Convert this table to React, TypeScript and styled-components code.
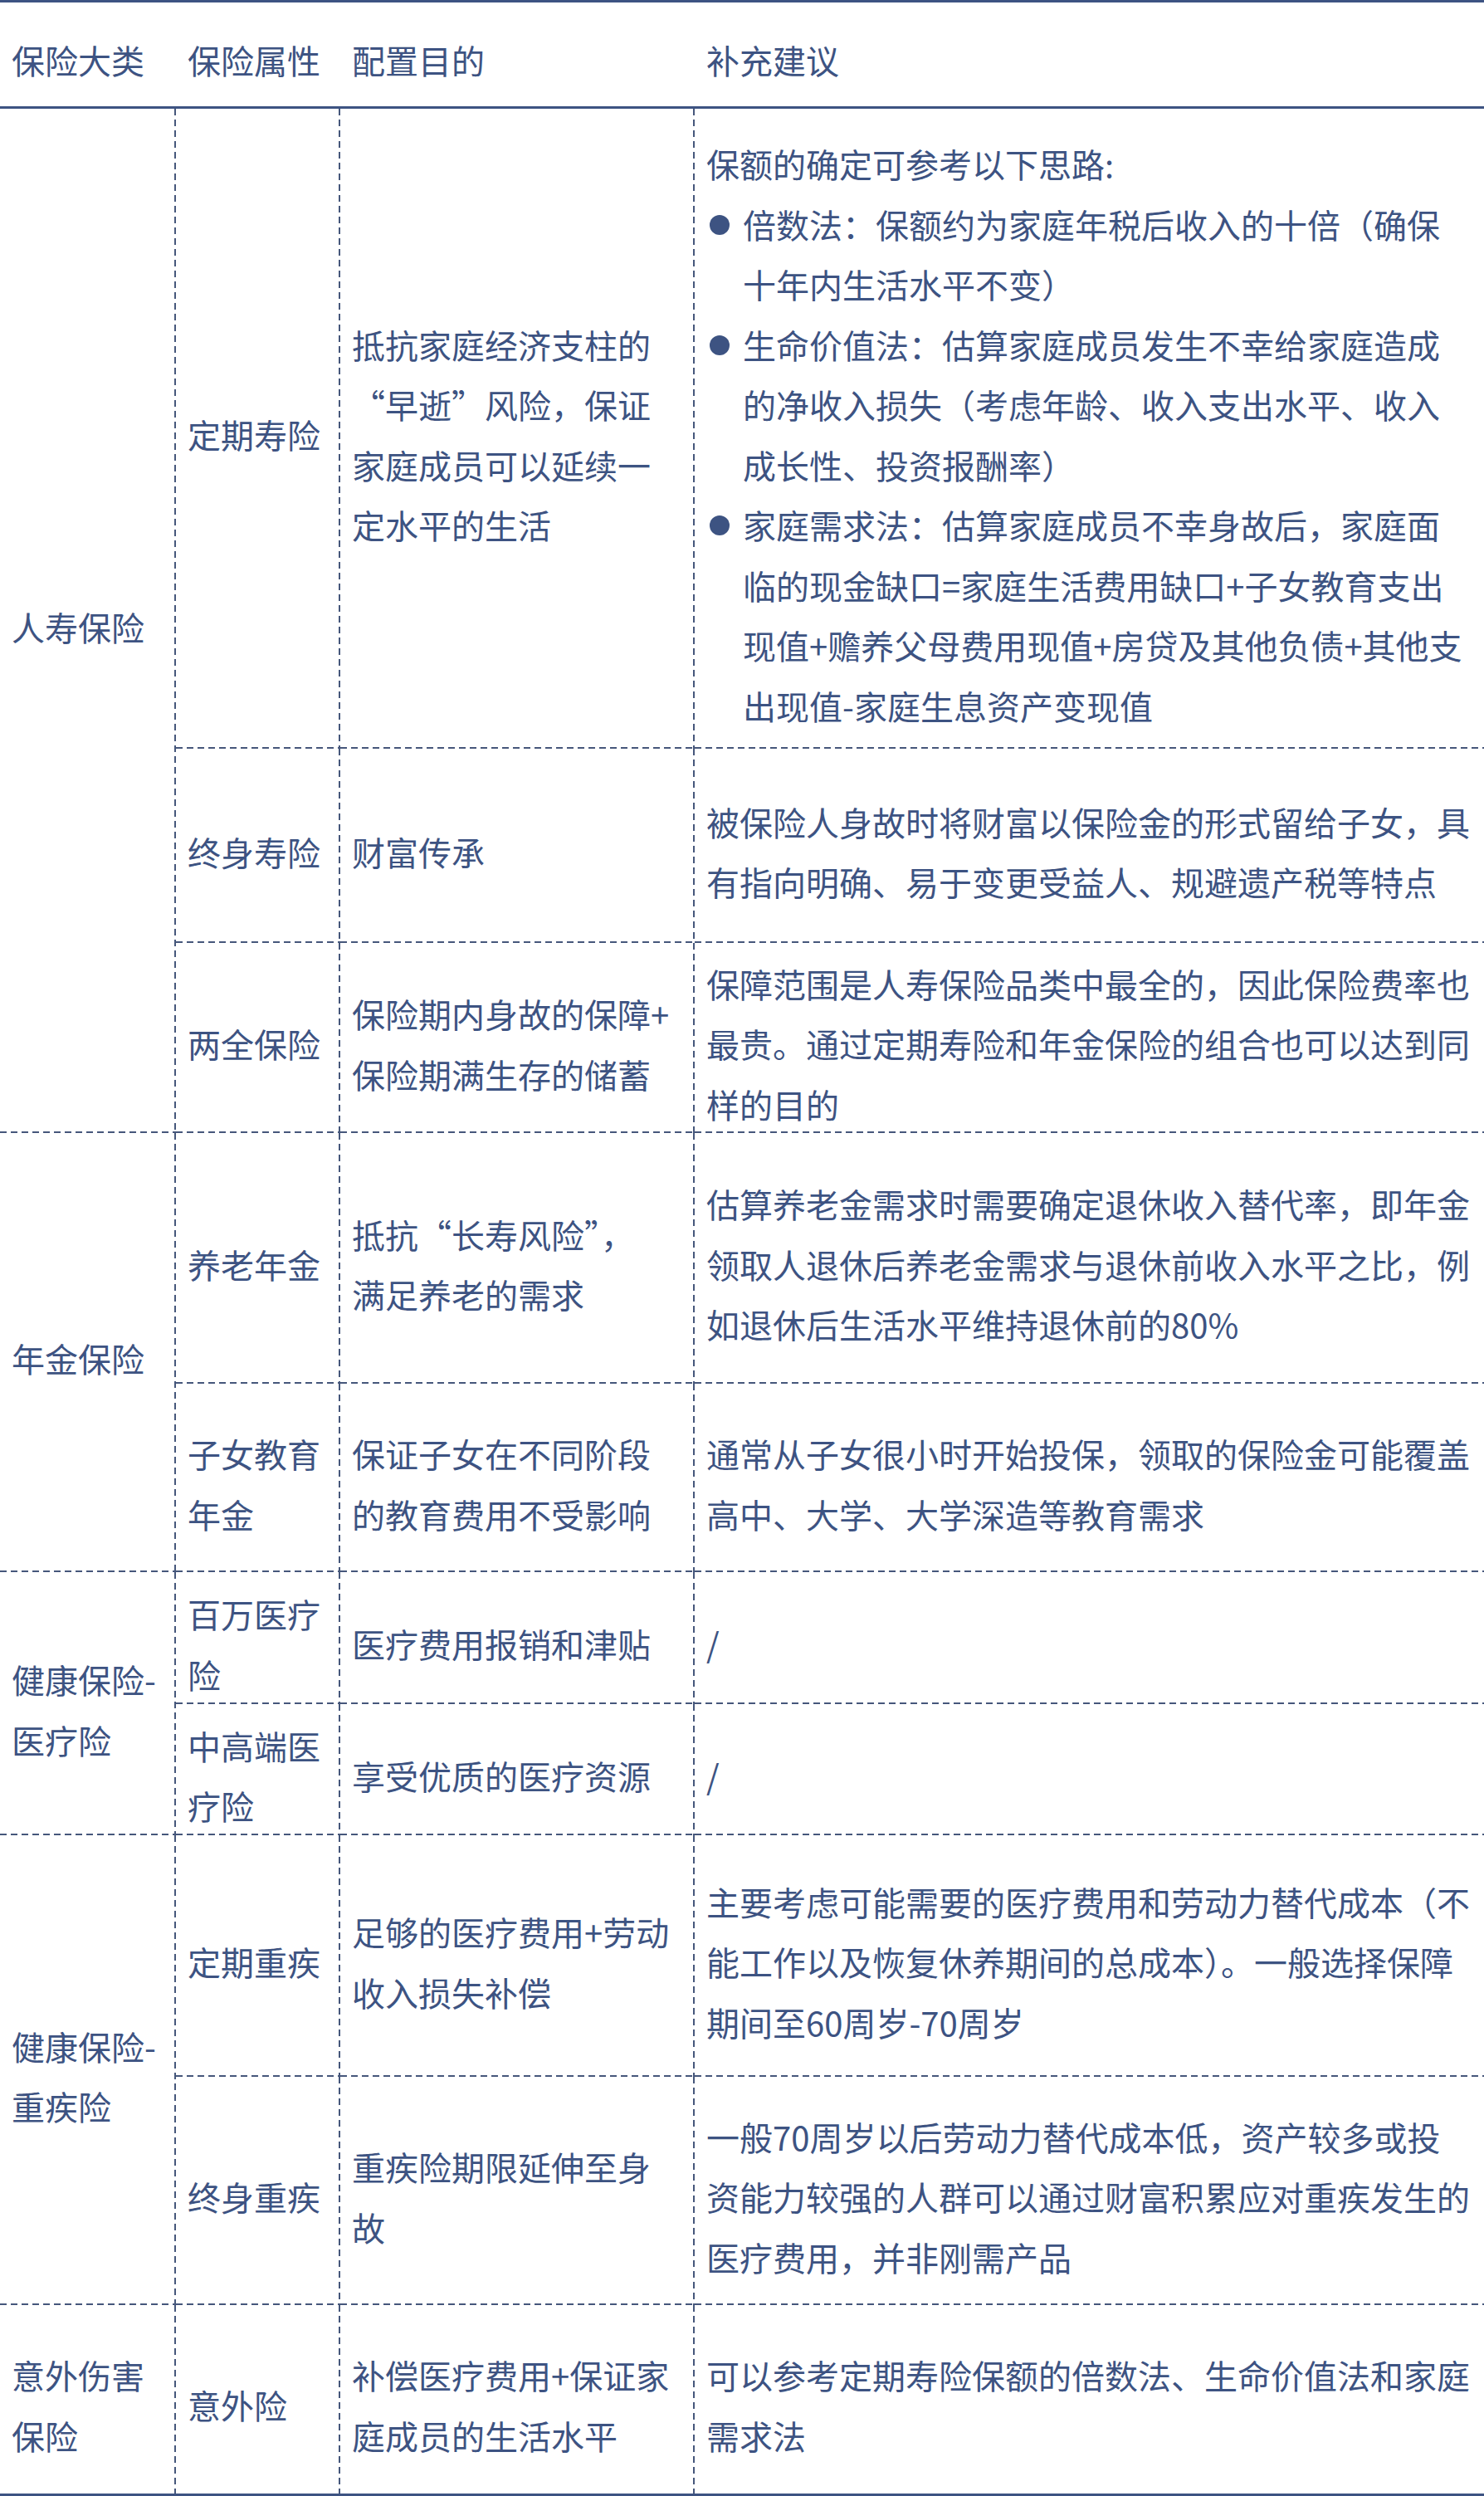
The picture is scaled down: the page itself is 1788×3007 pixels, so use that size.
import React from "react";
import styled, { createGlobalStyle } from "styled-components";

const INK = "#3d5382";
const LINE = "#46577b";

const GlobalStyle = createGlobalStyle`
  html, body {
    margin: 0;
    padding: 0;
    background: #ffffff;
  }
  body {
    font-family: "Noto Sans CJK SC", "Noto Sans", sans-serif;
    color: ${INK};
  }
`;

const COLS = "212px 198px 427px 951px";
const ROW_HEIGHTS = [771, 234, 229, 302, 227, 159, 158, 291, 275, 227];
const PAD_RIGHT = [7, 7, 15, 16];

type Advice = string | { intro: string; bullets: string[] };

type Item = {
  name: string;
  purpose: string;
  advice: Advice;
};

type Group = {
  title: string;
  items: Item[];
};

// "\n" marks the places where the original slide breaks a line differently
// from the browser's own CJK line breaking (quotes and "+" stick to neighbours)
const groups: Group[] = [
  {
    title: "人寿保险",
    items: [
      {
        name: "定期寿险",
        purpose: "抵抗家庭经济支柱的\n“早逝”风险，保证家庭成员可以延续一定水平的生活",
        advice: {
          intro: "保额的确定可参考以下思路:",
          bullets: [
            "倍数法：保额约为家庭年税后收入的十倍（确保十年内生活水平不变）",
            "生命价值法：估算家庭成员发生不幸给家庭造成的净收入损失（考虑年龄、收入支出水平、收入成长性、投资报酬率）",
            "家庭需求法：估算家庭成员不幸身故后，家庭面临的现金缺口=家庭生活费用缺口+子女教育支出现值+赡养父母费用现值+房贷及其他负债+其他支出现值-家庭生息资产变现值",
          ],
        },
      },
      {
        name: "终身寿险",
        purpose: "财富传承",
        advice: "被保险人身故时将财富以保险金的形式留给子女，具有指向明确、易于变更受益人、规避遗产税等特点",
      },
      {
        name: "两全保险",
        purpose: "保险期内身故的保障+\n保险期满生存的储蓄",
        advice: "保障范围是人寿保险品类中最全的，因此保险费率也最贵。通过定期寿险和年金保险的组合也可以达到同样的目的",
      },
    ],
  },
  {
    title: "年金保险",
    items: [
      {
        name: "养老年金",
        purpose: "抵抗“长寿风险”，\n满足养老的需求",
        advice: "估算养老金需求时需要确定退休收入替代率，即年金领取人退休后养老金需求与退休前收入水平之比，例如退休后生活水平维持退休前的80%",
      },
      {
        name: "子女教育年金",
        purpose: "保证子女在不同阶段的教育费用不受影响",
        advice: "通常从子女很小时开始投保，领取的保险金可能覆盖高中、大学、大学深造等教育需求",
      },
    ],
  },
  {
    title: "健康保险-医疗险",
    items: [
      { name: "百万医疗险", purpose: "医疗费用报销和津贴", advice: "/" },
      { name: "中高端医疗险", purpose: "享受优质的医疗资源", advice: "/" },
    ],
  },
  {
    title: "健康保险-重疾险",
    items: [
      {
        name: "定期重疾",
        purpose: "足够的医疗费用+劳动收入损失补偿",
        advice: "主要考虑可能需要的医疗费用和劳动力替代成本（不能工作以及恢复休养期间的总成本）。一般选择保障期间至60周岁-70周岁",
      },
      {
        name: "终身重疾",
        purpose: "重疾险期限延伸至身故",
        advice: "一般70周岁以后劳动力替代成本低，资产较多或投资能力较强的人群可以通过财富积累应对重疾发生的医疗费用，并非刚需产品",
      },
    ],
  },
  {
    title: "意外伤害保险",
    items: [
      {
        name: "意外险",
        purpose: "补偿医疗费用+保证家庭成员的生活水平",
        advice: "可以参考定期寿险保额的倍数法、生命价值法和家庭需求法",
      },
    ],
  },
];

const dashV = `repeating-linear-gradient(to bottom, ${LINE} 0 8px, transparent 8px 13px)`;
const dashH = `repeating-linear-gradient(to right, ${LINE} 0 8px, transparent 8px 13px)`;

const Sheet = styled.div`
  width: 1788px;
  border-top: 3px solid ${INK};
  border-bottom: 3px solid ${INK};
  font-size: 40px;
  line-height: 72.5px;
`;

const HeadRow = styled.div`
  display: grid;
  grid-template-columns: ${COLS};
  height: 125px;
  border-bottom: 3px solid ${INK};
`;

const HeadCell = styled.div<{ $col: number }>`
  display: flex;
  align-items: center;
  padding: 14px ${(p) => PAD_RIGHT[p.$col]}px 0 14px;
  white-space: nowrap;
`;

const Body = styled.div<{ $rows: string }>`
  display: grid;
  grid-template-columns: ${COLS};
  grid-template-rows: ${(p) => p.$rows};
`;

const Cell = styled.div<{ $col: number; $span?: number; $bottom: boolean }>`
  grid-column: ${(p) => p.$col + 1};
  grid-row: span ${(p) => p.$span ?? 1};
  min-width: 0;
  display: flex;
  flex-direction: column;
  justify-content: center;
  padding: 14px ${(p) => PAD_RIGHT[p.$col]}px 0 14px;
  white-space: pre-line;
  background-repeat: no-repeat;
  background-image: ${(p) =>
    [p.$col < 3 ? dashV : "", p.$bottom ? dashH : ""].filter(Boolean).join(", ") || "none"};
  background-size: ${(p) =>
    [p.$col < 3 ? "2px 100%" : "", p.$bottom ? "100% 2px" : ""].filter(Boolean).join(", ") || "auto"};
  background-position: ${(p) =>
    [p.$col < 3 ? "right top" : "", p.$bottom ? "left bottom" : ""].filter(Boolean).join(", ") ||
    "0 0"};
`;

const BulletList = styled.ul`
  list-style: none;
  margin: 0;
  padding: 0;
`;

const BulletItem = styled.li`
  display: flex;
  align-items: flex-start;
  padding-right: 1px;
`;

const Dot = styled.span`
  flex: none;
  width: 24px;
  height: 24px;
  margin: 25px 16px 0 4px;
  border-radius: 50%;
  background: ${INK};
`;

const BulletText = styled.span`
  flex: 1;
  min-width: 0;
`;

const AdviceBlock = ({ advice }: { advice: Advice }) => {
  if (typeof advice === "string") return <div>{advice}</div>;
  return (
    <>
      <div>{advice.intro}</div>
      <BulletList>
        {advice.bullets.map((b) => (
          <BulletItem key={b}>
            <Dot />
            <BulletText>{b}</BulletText>
          </BulletItem>
        ))}
      </BulletList>
    </>
  );
};

const App = () => {
  const total = groups.reduce((n, g) => n + g.items.length, 0);
  let rowIndex = 0;

  return (
    <>
      <GlobalStyle />
      <Sheet>
        <HeadRow>
          {["保险大类", "保险属性", "配置目的", "补充建议"].map((h, i) => (
            <HeadCell key={h} $col={i}>
              {h}
            </HeadCell>
          ))}
        </HeadRow>
        <Body $rows={ROW_HEIGHTS.map((h) => `${h}px`).join(" ")}>
          {groups.map((g) => {
            const start = rowIndex;
            rowIndex += g.items.length;
            const groupLast = rowIndex === total;
            return (
              <React.Fragment key={g.title}>
                <Cell $col={0} $span={g.items.length} $bottom={!groupLast}>
                  {g.title}
                </Cell>
                {g.items.map((it, i) => {
                  const last = start + i === total - 1;
                  return (
                    <React.Fragment key={it.name}>
                      <Cell $col={1} $bottom={!last}>
                        {it.name}
                      </Cell>
                      <Cell $col={2} $bottom={!last}>
                        {it.purpose}
                      </Cell>
                      <Cell $col={3} $bottom={!last}>
                        <AdviceBlock advice={it.advice} />
                      </Cell>
                    </React.Fragment>
                  );
                })}
              </React.Fragment>
            );
          })}
        </Body>
      </Sheet>
    </>
  );
};

export default App;
